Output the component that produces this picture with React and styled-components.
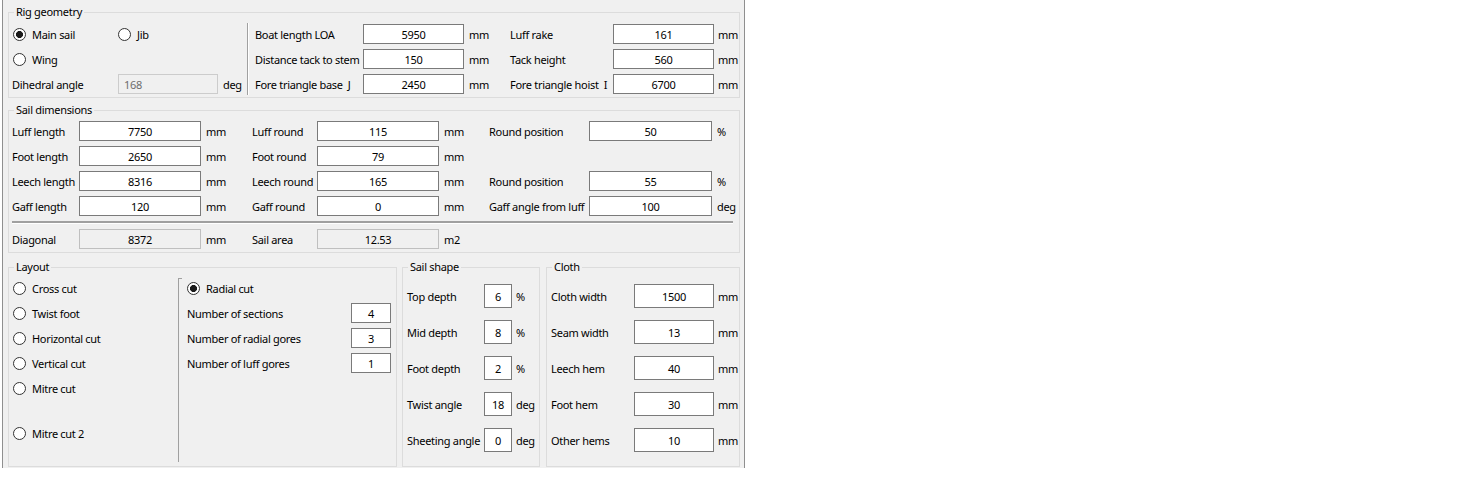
import React from 'react'
import styled, { createGlobalStyle } from 'styled-components'

const GlobalStyle = createGlobalStyle`
  html, body {
    margin: 0;
    padding: 0;
    background: #fff;
  }
  body {
    font-family: 'Noto Sans', 'Open Sans', sans-serif;
    font-size: 11px;
    letter-spacing: -0.3px;
    color: #000;
  }
`

const rigMiddle = [
  ['Boat length LOA', '5950', 'mm'],
  ['Distance tack to stem', '150', 'mm'],
  ['Fore triangle base  J', '2450', 'mm'],
]

const rigRight = [
  ['Luff rake', '161', 'mm'],
  ['Tack height', '560', 'mm'],
  ['Fore triangle hoist  I', '6700', 'mm'],
]

const sailRows = [
  [['Luff length', '7750', 'mm'], ['Luff round', '115', 'mm'], ['Round position', '50', '%']],
  [['Foot length', '2650', 'mm'], ['Foot round', '79', 'mm'], null],
  [['Leech length', '8316', 'mm'], ['Leech round', '165', 'mm'], ['Round position', '55', '%']],
  [['Gaff length', '120', 'mm'], ['Gaff round', '0', 'mm'], ['Gaff angle from luff', '100', 'deg']],
]

const layoutCuts = ['Cross cut', 'Twist foot', 'Horizontal cut', 'Vertical cut', 'Mitre cut']

const radialRows = [
  ['Number of sections', '4'],
  ['Number of radial gores', '3'],
  ['Number of luff gores', '1'],
]

const shapeRows = [
  ['Top depth', '6', '%'],
  ['Mid depth', '8', '%'],
  ['Foot depth', '2', '%'],
  ['Twist angle', '18', 'deg'],
  ['Sheeting angle', '0', 'deg'],
]

const clothRows = [
  ['Cloth width', '1500', 'mm'],
  ['Seam width', '13', 'mm'],
  ['Leech hem', '40', 'mm'],
  ['Foot hem', '30', 'mm'],
  ['Other hems', '10', 'mm'],
]

const App = () => {
  return (
    <Page>
      <GlobalStyle />
      <Window>
        <Group>
          <Legend>Rig geometry</Legend>
          <RigBody>
            <RigLeft>
              <RadioItem checked label="Main sail" $nudge />
              <RadioItem label="Jib" />
              <span />
              <RadioItem label="Wing" $nudge />
              <span />
              <span />
              <Label>Dihedral angle</Label>
              <Field $disabled>168</Field>
              <Unit>deg</Unit>
            </RigLeft>
            <VSep />
            <RigGrid $label={108}>
              {rigMiddle.map(([l, v, u]) => (
                <React.Fragment key={l}>
                  <Label>{l}</Label>
                  <Field>{v}</Field>
                  <Unit $pad={5}>{u}</Unit>
                </React.Fragment>
              ))}
            </RigGrid>
            <RigGrid $label={103}>
              {rigRight.map(([l, v, u]) => (
                <React.Fragment key={l}>
                  <Label>{l}</Label>
                  <Field>{v}</Field>
                  <Unit $pad={4}>{u}</Unit>
                </React.Fragment>
              ))}
            </RigGrid>
          </RigBody>
        </Group>

        <Group $top={5}>
          <Legend>Sail dimensions</Legend>
          <SailGrid>
            {sailRows.map((row, i) =>
              row.map((cell, j) =>
                cell ? (
                  <React.Fragment key={`${i}-${j}`}>
                    <Label>{cell[0]}</Label>
                    <Field>{cell[1]}</Field>
                    <Unit $pad={5}>{cell[2]}</Unit>
                  </React.Fragment>
                ) : (
                  <React.Fragment key={`${i}-${j}`}>
                    <span />
                    <span />
                    <span />
                  </React.Fragment>
                )
              )
            )}
            <HSep />
            <Label>Diagonal</Label>
            <Field $readOnly>8372</Field>
            <Unit $pad={5}>mm</Unit>
            <Label>Sail area</Label>
            <Field $readOnly>12.53</Field>
            <Unit $pad={5}>m2</Unit>
          </SailGrid>
        </Group>

        <BottomRow>
          <Group $w={389}>
            <Legend>Layout</Legend>
            <LayoutBody>
              <CutList>
                {layoutCuts.map((c) => (
                  <CutRow key={c}>
                    <RadioItem label={c} />
                  </CutRow>
                ))}
                <CutRow $gap={20}>
                  <RadioItem label="Mitre cut 2" />
                </CutRow>
              </CutList>
              <RadialCol>
                <CutRow>
                  <RadioItem checked label="Radial cut" />
                </CutRow>
                <RadialGrid>
                  {radialRows.map(([l, v]) => (
                    <React.Fragment key={l}>
                      <Label>{l}</Label>
                      <Field>{v}</Field>
                    </React.Fragment>
                  ))}
                </RadialGrid>
              </RadialCol>
            </LayoutBody>
          </Group>

          <Group $w={138}>
            <Legend>Sail shape</Legend>
            <TallGrid $label={77} $field={28}>
              {shapeRows.map(([l, v, u]) => (
                <React.Fragment key={l}>
                  <Label>{l}</Label>
                  <Field>{v}</Field>
                  <Unit $pad={4}>{u}</Unit>
                </React.Fragment>
              ))}
            </TallGrid>
          </Group>

          <Group $w={194}>
            <Legend>Cloth</Legend>
            <TallGrid $label={83} $field={80}>
              {clothRows.map(([l, v, u]) => (
                <React.Fragment key={l}>
                  <Label>{l}</Label>
                  <Field>{v}</Field>
                  <Unit $pad={4}>{u}</Unit>
                </React.Fragment>
              ))}
            </TallGrid>
          </Group>
        </BottomRow>
      </Window>
    </Page>
  )
}

const RadioItem = ({ label, checked, $nudge }) => (
  <RadioWrap $nudge={$nudge}>
    <RadioDot $checked={checked} />
    <span>{label}</span>
  </RadioWrap>
)

const Page = styled.div`
  width: 1476px;
  height: 484px;
  background: #fff;
`

const Window = styled.div`
  margin-left: 2px;
  width: 743px;
  height: 468px;
  box-sizing: border-box;
  background: #f0f0f0;
  border-left: 1px solid #8f8f8f;
  border-right: 1px solid #8f8f8f;
  padding: 5px 4px 0 5px;
  display: flex;
  flex-direction: column;
`

const Group = styled.fieldset`
  margin: ${(p) => p.$top || 0}px 0 0 0;
  padding: 0;
  min-width: 0;
  box-sizing: border-box;
  border: 1px solid #dcdcdc;
  ${(p) => (p.$w ? `width: ${p.$w}px; flex: none;` : '')}
`

const Legend = styled.legend`
  margin-left: 5px;
  padding: 0 2px;
  font-size: 11px;
  line-height: 14px;
  color: #000;
`

const Label = styled.span`
  display: flex;
  align-items: center;
  white-space: pre;
  color: #000;
`

const Unit = styled.span`
  display: flex;
  align-items: center;
  padding-left: ${(p) => p.$pad || 5}px;
  white-space: nowrap;
`

const Field = styled.div`
  box-sizing: border-box;
  display: flex;
  align-items: center;
  justify-content: ${(p) => (p.$disabled ? 'flex-start' : 'center')};
  padding: 0 5px;
  height: 100%;
  border: 1px solid ${(p) => (p.$disabled ? '#cccccc' : p.$readOnly ? '#bfbfbf' : '#7a7a7a')};
  background: ${(p) => (p.$disabled || p.$readOnly ? '#f0f0f0' : '#fff')};
  color: ${(p) => (p.$disabled ? '#6d6d6d' : '#000')};
`

const RadioWrap = styled.span`
  display: flex;
  align-items: center;
  gap: 6px;
  margin-left: ${(p) => (p.$nudge ? 1 : 0)}px;
  white-space: nowrap;
`

const RadioDot = styled.span`
  flex: none;
  width: 13px;
  height: 13px;
  box-sizing: border-box;
  border-radius: 50%;
  border: 1px solid #333;
  background: ${(p) =>
    p.$checked ? 'radial-gradient(circle, #1a1a1a 0 3.2px, #fff 3.8px)' : '#fff'};
`

const RigBody = styled.div`
  display: flex;
  padding: 5px 0 3px 3px;
`

const RigLeft = styled.div`
  width: 235px;
  flex: none;
  display: grid;
  grid-template-columns: 106px 100px auto;
  grid-auto-rows: 20px;
  row-gap: 5px;
`

const VSep = styled.div`
  flex: none;
  width: 0;
  margin: -1px 6px -1px 0;
  border-left: 1px solid #a0a0a0;
  border-right: 1px solid #fff;
`

const RigGrid = styled.div`
  flex: none;
  width: 255px;
  display: grid;
  grid-template-columns: ${(p) => p.$label}px 101px auto;
  grid-auto-rows: 20px;
  row-gap: 5px;
`

const SailGrid = styled.div`
  display: grid;
  grid-template-columns: 67px 122px 51px 65px 122px 50px 100px 123px auto;
  grid-template-rows: repeat(4, 20px) 3px 20px;
  row-gap: 5px;
  padding: 4px 0 3px 3px;
`

const HSep = styled.div`
  grid-column: 1 / -1;
  box-sizing: border-box;
  height: 3px;
  margin-right: 6px;
  border-top: 2px solid #a0a0a0;
  border-bottom: 1px solid #fff;
`

const BottomRow = styled.div`
  display: flex;
  margin-top: 7px;
  height: 207px;
  & > fieldset + fieldset {
    margin-left: 5px;
  }
  & > fieldset:last-child {
    margin-left: 6px;
  }
`

const LayoutBody = styled.div`
  display: flex;
  padding: 4px 0 0 4px;
`

const CutList = styled.div`
  width: 165px;
  flex: none;
  display: flex;
  flex-direction: column;
  gap: 5px;
`

const CutRow = styled.div`
  height: 20px;
  display: flex;
  align-items: center;
  margin-top: ${(p) => p.$gap || 0}px;
`

const RadialCol = styled.div`
  position: relative;
  flex: none;
  width: 204px;
  height: 184px;
  box-sizing: border-box;
  border-left: 1px solid #a0a0a0;
  padding-left: 8px;
  display: flex;
  flex-direction: column;
  gap: 5px;
  &::before {
    content: '';
    position: absolute;
    left: 0;
    top: 0;
    width: 3px;
    height: 1px;
    background: #a0a0a0;
  }
`

const RadialGrid = styled.div`
  display: grid;
  grid-template-columns: 164px 40px;
  grid-auto-rows: 20px;
  row-gap: 5px;
`

const TallGrid = styled.div`
  display: grid;
  grid-template-columns: ${(p) => p.$label}px ${(p) => p.$field}px auto;
  grid-auto-rows: 24px;
  row-gap: 12px;
  padding: 10px 0 0 4px;
`

export default App
